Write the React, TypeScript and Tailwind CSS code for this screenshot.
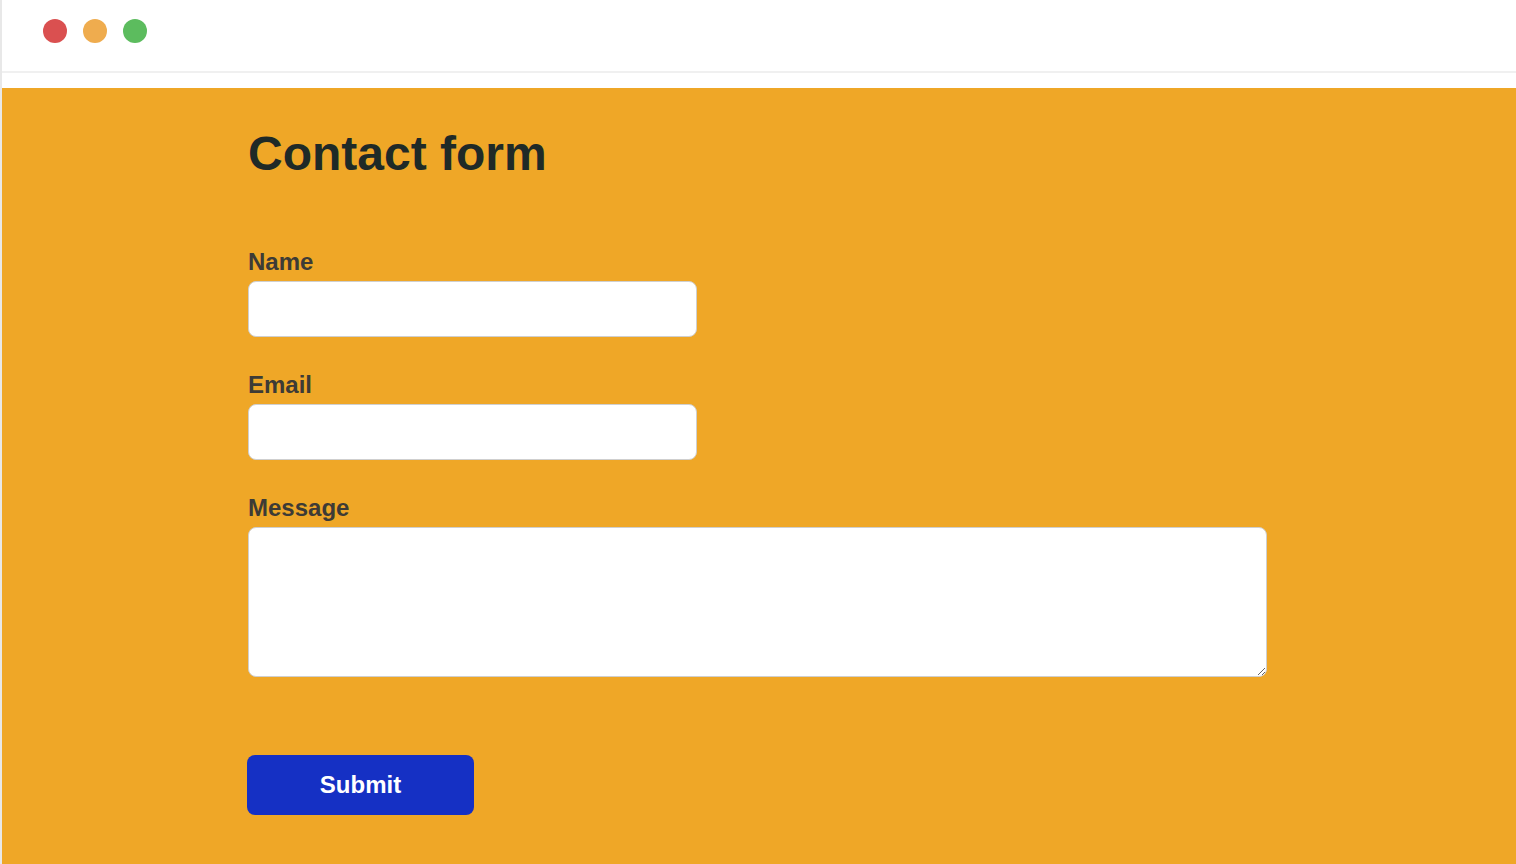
export default function App() {
  return (
    <div className="min-h-screen bg-white border-l-2 border-[#e8e8e8] font-['Liberation_Sans',Arial,sans-serif]">
      {/* Window bar */}
      <header className="h-[73px] flex items-start gap-4 pl-[41px] pt-[19px] border-b-2 border-[#f0f0f0]">
        <span className="w-6 h-6 rounded-full bg-[#da5050]" />
        <span className="w-6 h-6 rounded-full bg-[#efac4e]" />
        <span className="w-6 h-6 rounded-full bg-[#5cbc5e]" />
      </header>
      <div className="h-[15px] bg-white" />

      {/* Form */}
      <main className="bg-[#efa727] min-h-[776px] pl-[246px] pt-[42px] pb-12">
        <h1 className="text-[48px] leading-[48px] font-bold text-[#1f2a27]">Contact form</h1>

        <form className="mt-[70px] flex flex-col" onSubmit={(e) => e.preventDefault()}>
          <label className="block text-[24px] leading-[28px] font-bold text-[#3d3b36] mb-[5px]">Name</label>
          <input
            type="text"
            className="w-[449px] h-[56px] rounded-lg bg-white border border-[#cfcfcf] px-3 outline-none"
          />

          <label className="block text-[24px] leading-[28px] font-bold text-[#3d3b36] mt-[34px] mb-[5px]">Email</label>
          <input
            type="email"
            className="w-[449px] h-[56px] rounded-lg bg-white border border-[#cfcfcf] px-3 outline-none"
          />

          <label className="block text-[24px] leading-[28px] font-bold text-[#3d3b36] mt-[34px] mb-[5px]">Message</label>
          <textarea className="w-[1019px] h-[150px] rounded-lg bg-white border border-[#cfcfcf] px-3 py-2 outline-none" />

          <button
            type="submit"
            className="mt-[78px] w-[227px] h-[60px] rounded-lg bg-[#1530c4] text-white text-[24px] font-bold -ml-px"
          >
            Submit
          </button>
        </form>
      </main>
    </div>
  );
}
